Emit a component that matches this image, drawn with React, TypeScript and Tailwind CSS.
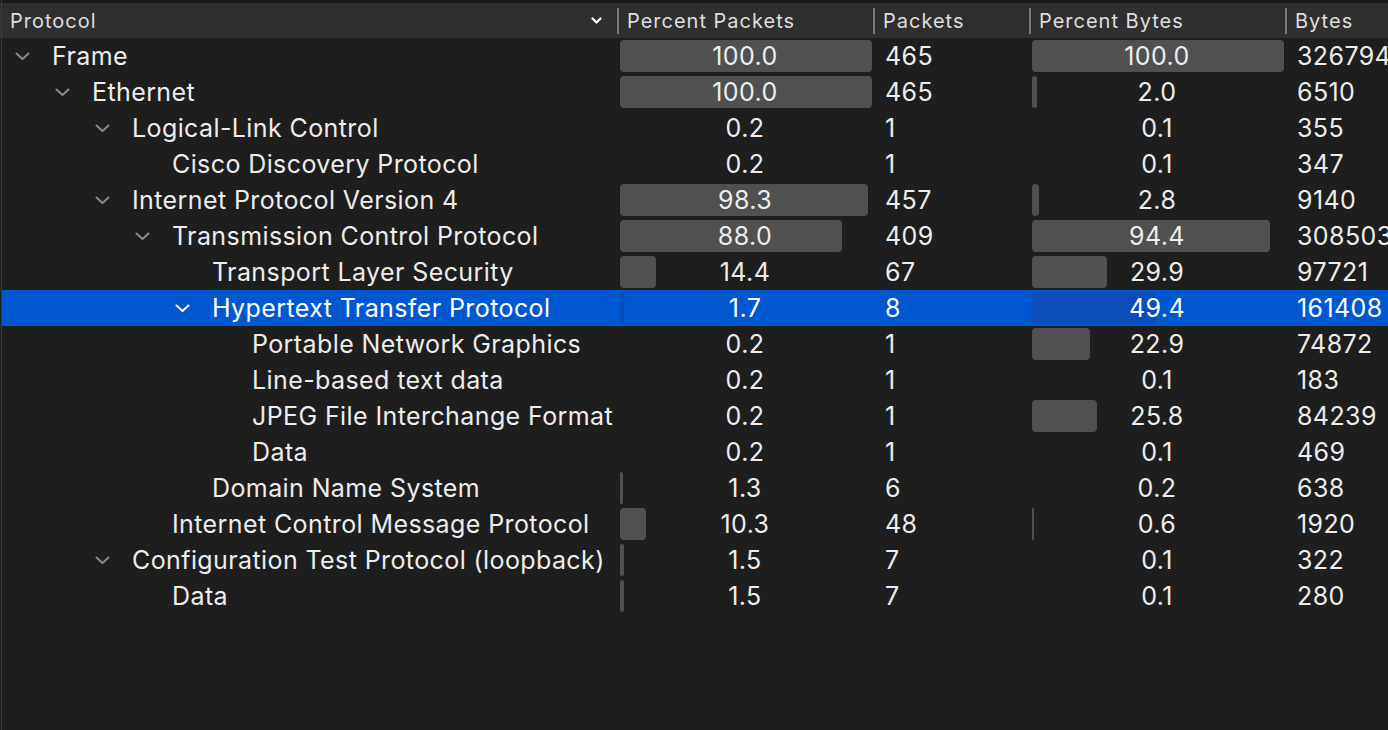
import React from "react";

type Row = {
  depth: number;
  name: string;
  expandable: boolean;
  pp: string;
  packets: string;
  pb: string;
  bytes: string;
  selected?: boolean;
};

const rows: Row[] = [
  { depth: 0, name: "Frame", expandable: true, pp: "100.0", packets: "465", pb: "100.0", bytes: "326794" },
  { depth: 1, name: "Ethernet", expandable: true, pp: "100.0", packets: "465", pb: "2.0", bytes: "6510" },
  { depth: 2, name: "Logical-Link Control", expandable: true, pp: "0.2", packets: "1", pb: "0.1", bytes: "355" },
  { depth: 3, name: "Cisco Discovery Protocol", expandable: false, pp: "0.2", packets: "1", pb: "0.1", bytes: "347" },
  { depth: 2, name: "Internet Protocol Version 4", expandable: true, pp: "98.3", packets: "457", pb: "2.8", bytes: "9140" },
  { depth: 3, name: "Transmission Control Protocol", expandable: true, pp: "88.0", packets: "409", pb: "94.4", bytes: "308503" },
  { depth: 4, name: "Transport Layer Security", expandable: false, pp: "14.4", packets: "67", pb: "29.9", bytes: "97721" },
  { depth: 4, name: "Hypertext Transfer Protocol", expandable: true, pp: "1.7", packets: "8", pb: "49.4", bytes: "161408", selected: true },
  { depth: 5, name: "Portable Network Graphics", expandable: false, pp: "0.2", packets: "1", pb: "22.9", bytes: "74872" },
  { depth: 5, name: "Line-based text data", expandable: false, pp: "0.2", packets: "1", pb: "0.1", bytes: "183" },
  { depth: 5, name: "JPEG File Interchange Format", expandable: false, pp: "0.2", packets: "1", pb: "25.8", bytes: "84239" },
  { depth: 5, name: "Data", expandable: false, pp: "0.2", packets: "1", pb: "0.1", bytes: "469" },
  { depth: 4, name: "Domain Name System", expandable: false, pp: "1.3", packets: "6", pb: "0.2", bytes: "638" },
  { depth: 3, name: "Internet Control Message Protocol", expandable: false, pp: "10.3", packets: "48", pb: "0.6", bytes: "1920" },
  { depth: 2, name: "Configuration Test Protocol (loopback)", expandable: true, pp: "1.5", packets: "7", pb: "0.1", bytes: "322" },
  { depth: 3, name: "Data", expandable: false, pp: "1.5", packets: "7", pb: "0.1", bytes: "280" },
];

const indents = ["pl-[15px]", "pl-[55px]", "pl-[95px]", "pl-[135px]", "pl-[175px]", "pl-[215px]"];

function Chevron({ white }: { white?: boolean }) {
  return (
    <svg width="15" height="9" viewBox="0 0 15 9" fill="none">
      <path
        d="M1.5 1.5 L7.5 7 L13.5 1.5"
        stroke={white ? "#ffffff" : "#8a8a8a"}
        strokeWidth="2"
        strokeLinecap="round"
        strokeLinejoin="round"
      />
    </svg>
  );
}

function Bar({ pct, selected }: { pct: string; selected?: boolean }) {
  const w = (parseFloat(pct) * 252) / 100;
  return (
    <div className="relative flex h-full w-full items-center justify-center pt-[1px]">
      {w >= 1 && (
        <div
          className={`absolute left-[3px] top-[2px] bottom-[2px] rounded-[4px] ${
            selected ? "bg-[#0a4db8]" : "bg-[#505050]"
          }`}
          style={{ width: `${w}px` }}
        />
      )}
      <span className="relative">{pct}</span>
    </div>
  );
}

export default function App() {
  return (
    <div
      className="relative h-[730px] w-[1388px] overflow-hidden bg-[#1e1e1e] text-[#ededed]"
      style={{ fontFamily: "Inter, 'Noto Sans', sans-serif" }}
    >
      <div className="absolute left-[1px] top-0 bottom-0 w-px bg-[#3a3a3a]" />
      <div className="h-[3px] bg-[#1a1a1a]" />
      <div className="flex h-[35px] w-[1500px] items-center bg-[#2f2f2f] text-[20px] tracking-[1px] text-[#dedede]">
        <div className="flex h-full w-[617px] shrink-0 items-center justify-between pl-[10px] pr-[15px]">
          <span>Protocol</span>
          <svg width="11" height="7" viewBox="0 0 11 7" fill="none">
            <path d="M1.5 1.5 L5.5 5.5 L9.5 1.5" stroke="#ffffff" strokeWidth="2.2" strokeLinecap="round" strokeLinejoin="round" />
          </svg>
        </div>
        <div className="flex h-full w-[256px] shrink-0 items-center">
          <div className="h-[26px] w-[2px] bg-[#7a7a7a]" />
          <span className="pl-[8px]">Percent Packets</span>
        </div>
        <div className="flex h-full w-[156px] shrink-0 items-center">
          <div className="h-[26px] w-[2px] bg-[#7a7a7a]" />
          <span className="pl-[8px]">Packets</span>
        </div>
        <div className="flex h-full w-[256px] shrink-0 items-center">
          <div className="h-[26px] w-[2px] bg-[#7a7a7a]" />
          <span className="pl-[8px]">Percent Bytes</span>
        </div>
        <div className="flex h-full w-[200px] shrink-0 items-center">
          <div className="h-[26px] w-[2px] bg-[#7a7a7a]" />
          <span className="pl-[8px]">Bytes</span>
        </div>
      </div>
      <div className="flex flex-col text-[25px] tracking-[0.4px]">
        {rows.map((r, i) => (
          <div
            key={i}
            className={`flex h-[36px] w-[1500px] items-center ${
              r.selected ? "ml-[2px] bg-[#0058d0] text-white" : ""
            }`}
          >
            <div
              className={`flex h-full w-[617px] shrink-0 items-center pt-[1px] ${indents[r.depth]} ${
                r.selected ? "-ml-[2px]" : ""
              }`}
            >
              <div className="flex w-[37px] shrink-0 items-center">
                {r.expandable && <Chevron white={r.selected} />}
              </div>
              <span className="whitespace-nowrap">{r.name}</span>
            </div>
            <div className="h-full w-[256px] shrink-0">
              <Bar pct={r.pp} selected={r.selected} />
            </div>
            <div className="flex h-full w-[156px] shrink-0 items-center pl-[12px] pt-[1px]">{r.packets}</div>
            <div className="h-full w-[256px] shrink-0">
              <Bar pct={r.pb} selected={r.selected} />
            </div>
            <div className="flex h-full w-[200px] shrink-0 items-center pl-[12px] pt-[1px]">{r.bytes}</div>
          </div>
        ))}
      </div>
    </div>
  );
}
